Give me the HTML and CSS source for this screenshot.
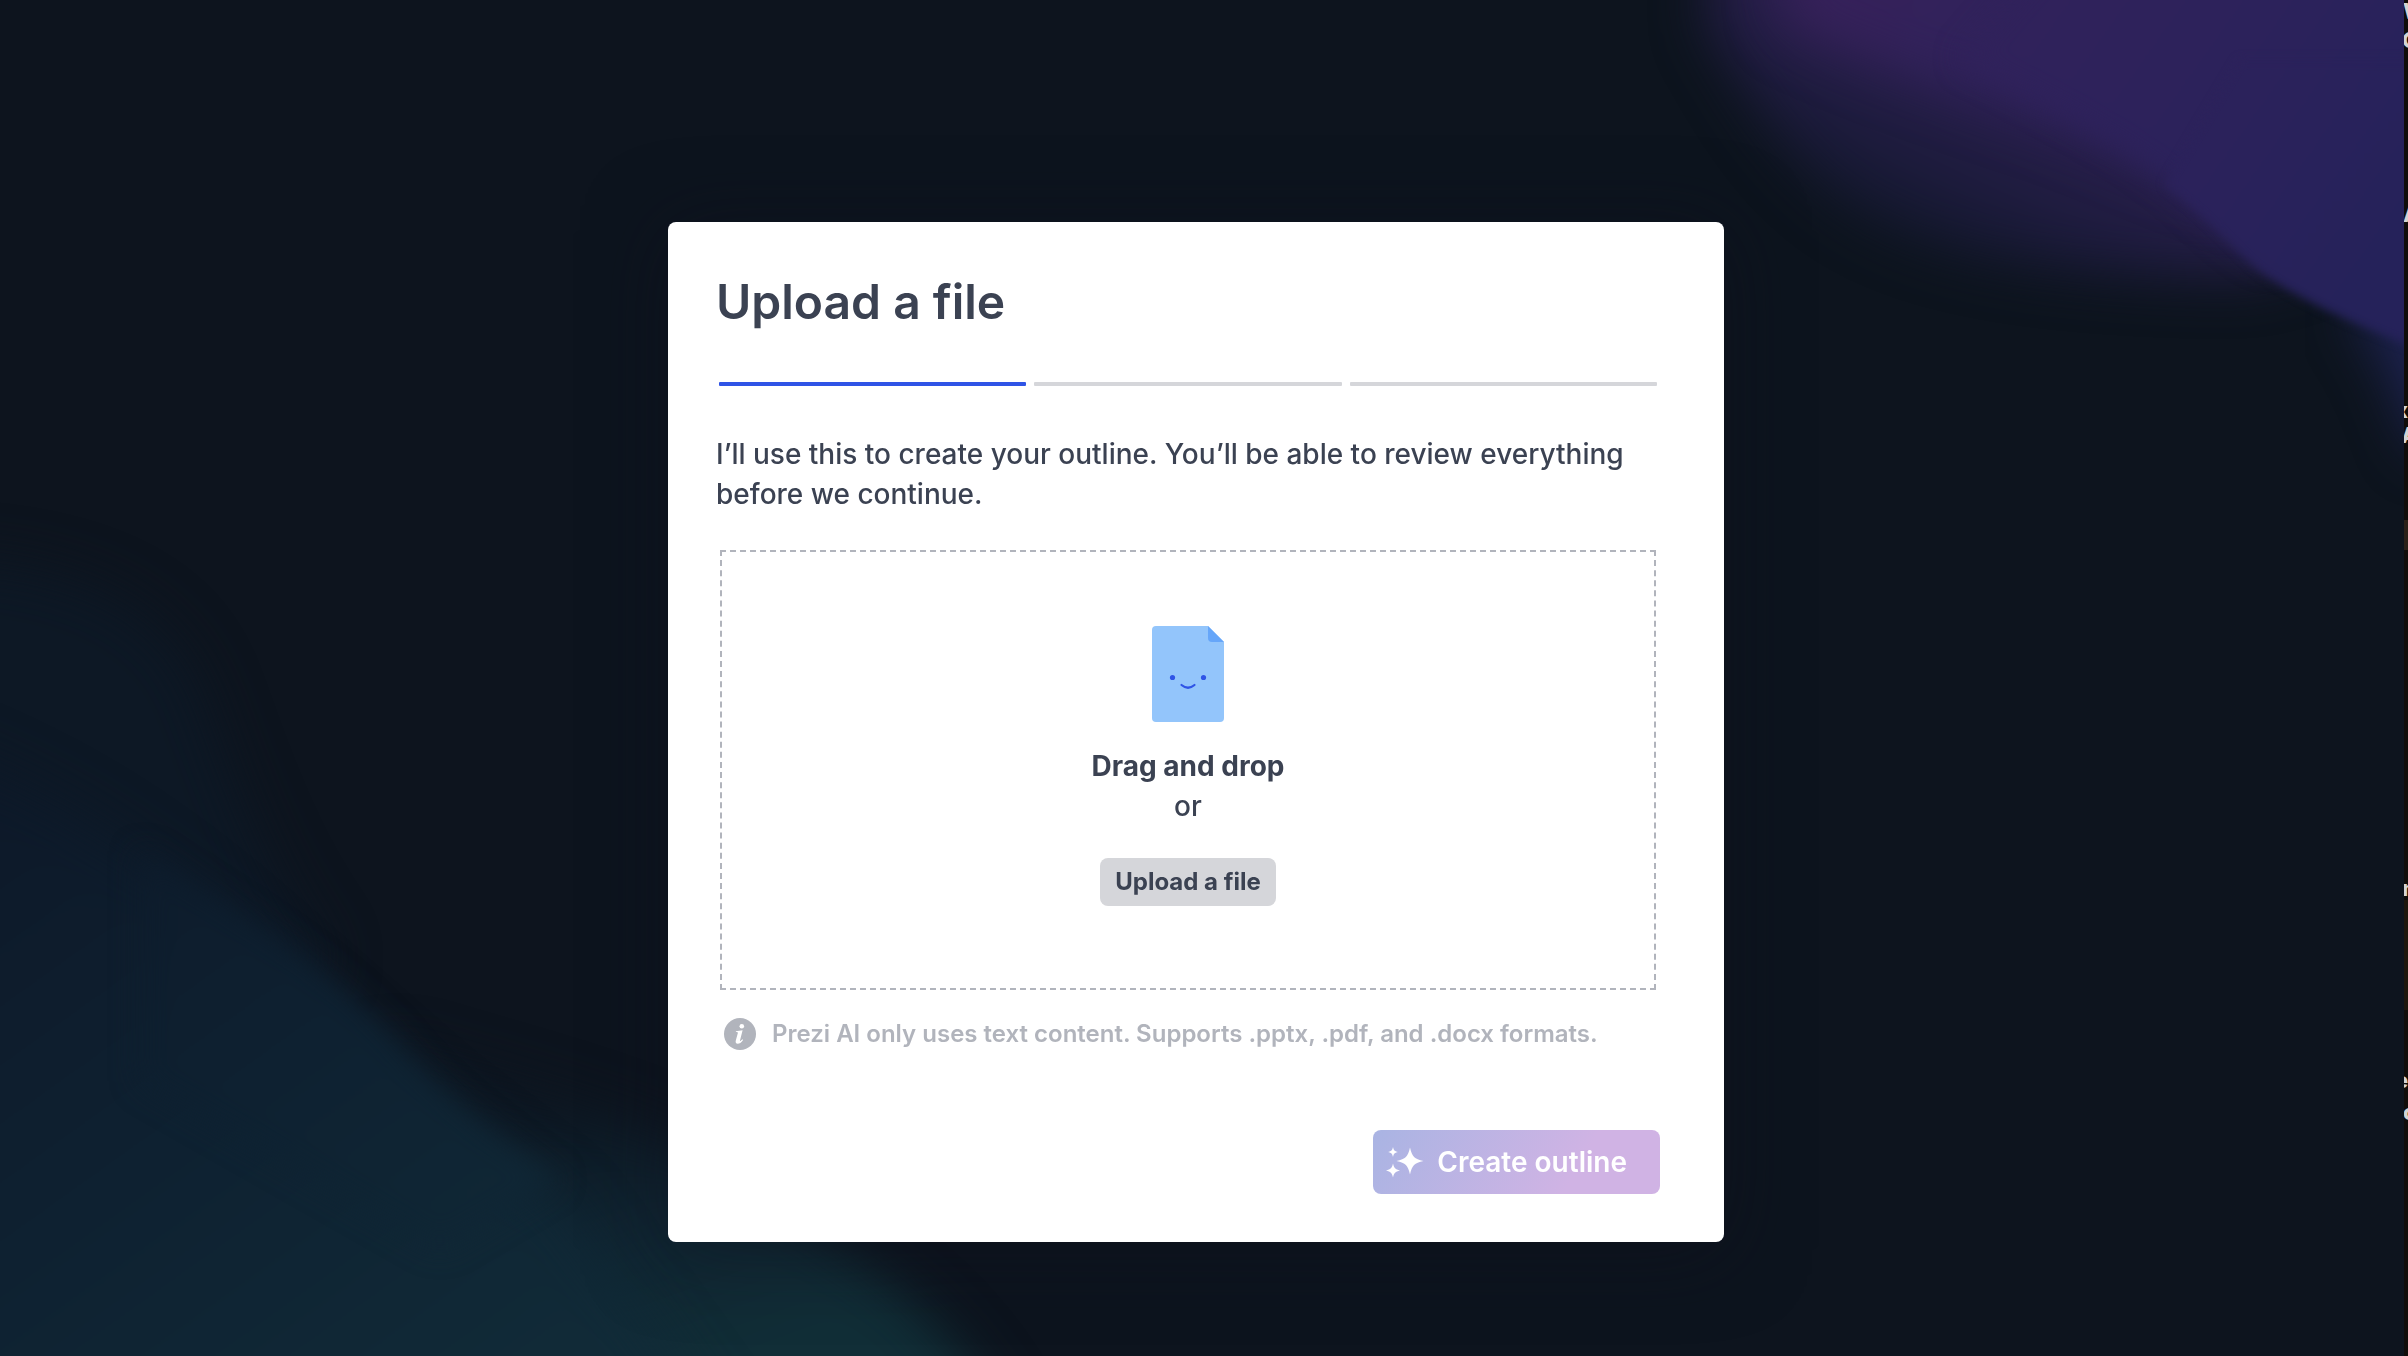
FILE: index.html
```html
<!DOCTYPE html>
<html lang="en">
<head>
<meta charset="utf-8">
<meta name="viewport" content="width=device-width, initial-scale=1">
<title>Upload a file</title>
<link rel="stylesheet" href="styles.css">
</head>
<body>
<svg class="backdrop" viewBox="0 0 2408 1356" preserveAspectRatio="none" aria-hidden="true">
  <defs>
    <linearGradient id="violet" gradientUnits="userSpaceOnUse" x1="1840" y1="0" x2="2320" y2="340">
      <stop offset="0" stop-color="#36215a"/>
      <stop offset=".2" stop-color="#31225b"/>
      <stop offset=".6" stop-color="#2c225b"/>
      <stop offset="1" stop-color="#25225a"/>
    </linearGradient>
    <linearGradient id="violetHalo" gradientUnits="userSpaceOnUse" x1="2060" y1="80" x2="1960" y2="290">
      <stop offset="0" stop-color="#2b1f4e"/>
      <stop offset=".5" stop-color="#1f1c40"/>
      <stop offset="1" stop-color="#101728"/>
    </linearGradient>
    <linearGradient id="sea" gradientUnits="userSpaceOnUse" x1="60" y1="700" x2="560" y2="1400">
      <stop offset="0" stop-color="#0d1828"/>
      <stop offset=".5" stop-color="#0e2131"/>
      <stop offset="1" stop-color="#112b38"/>
    </linearGradient>
    <linearGradient id="seaHalo" gradientUnits="userSpaceOnUse" x1="620" y1="1080" x2="720" y2="1356">
      <stop offset="0" stop-color="#0d1722"/>
      <stop offset=".5" stop-color="#102532"/>
      <stop offset="1" stop-color="#112e37"/>
    </linearGradient>
    <filter id="soft" x="-30%" y="-30%" width="160%" height="160%" color-interpolation-filters="sRGB"><feGaussianBlur stdDeviation="26"/></filter>
    <filter id="mid" x="-30%" y="-30%" width="160%" height="160%" color-interpolation-filters="sRGB"><feGaussianBlur stdDeviation="14"/></filter>
    <filter id="fine" x="-30%" y="-30%" width="160%" height="160%" color-interpolation-filters="sRGB"><feGaussianBlur stdDeviation="5"/></filter>
  </defs>
  <rect width="2408" height="1356" fill="#0d141e"/>
  <path fill="url(#violetHalo)" filter="url(#soft)" d="M1720-80L1705 20C1740 80 1770 140 1830 190C1910 255 2030 275 2250 278L2500 200V-80Z"/>
  <path fill="#1d2250" filter="url(#soft)" d="M2350 310C2385 350 2400 400 2420 450H2500V200Z"/>
  <path fill="url(#violet)" filter="url(#soft)" d="M1790-80L1780 20C1860 60 1940 85 2050 122C2120 145 2170 170 2250 200L2500 230V-80Z"/>
  <path fill="url(#violet)" filter="url(#mid)" d="M1960 60C2060 110 2130 150 2180 192C2210 220 2240 250 2265 262H2480V-80H2080Z"/>
  <path fill="url(#violet)" filter="url(#fine)" d="M2165 185C2200 210 2225 238 2252 264C2288 296 2350 322 2420 350V60H2240Z"/>
  <path fill="#0d1825" filter="url(#soft)" d="M-80 560C60 560 170 600 205 700C240 800 270 880 330 960L200 1100H-80Z"/>
  <path fill="url(#seaHalo)" filter="url(#soft)" d="M393 1050C520 1090 660 1120 740 1180C840 1250 950 1300 1020 1450H300V1100Z"/>
  <path fill="url(#sea)" filter="url(#soft)" d="M-80 740C80 800 180 880 270 960L430 1100L560 1200L740 1450H-80Z"/>
  <path fill="url(#sea)" filter="url(#mid)" d="M140 850C260 925 340 975 400 1045C440 1095 500 1140 560 1180L440 1250L140 1080Z"/>
</svg>

<main class="stage">
  <section class="dialog" role="dialog" aria-labelledby="dialog-title">
    <h1 class="dialog-title" id="dialog-title">Upload a file</h1>
    <div class="steps" role="progressbar" aria-label="Step" aria-valuemin="1" aria-valuemax="3" aria-valuenow="1">
      <span class="step step-active"></span>
      <span class="step"></span>
      <span class="step"></span>
    </div>
    <p class="intro">I’ll use this to create your outline. You’ll be able to review everything before we continue.</p>

    <div class="dropzone">
      <svg class="file-icon" viewBox="0 0 72 96" aria-hidden="true">
        <path fill="#93c5fb" d="M4 0H56L72 16V92a4 4 0 0 1-4 4H4a4 4 0 0 1-4-4V4a4 4 0 0 1 4-4Z"/>
        <path fill="#66a6f9" d="M56 0L72 16H60a4 4 0 0 1-4-4Z"/>
        <circle cx="20.500" cy="51.500" r="2.600" fill="#2f54e6"/>
        <circle cx="51.500" cy="51.500" r="2.600" fill="#2f54e6"/>
        <path d="M29.500 59Q36 64.500 42.500 59" fill="none" stroke="#2f54e6" stroke-width="2.200" stroke-linecap="round"/>
      </svg>
      <p class="drop-text"><strong>Drag and drop</strong><br>or</p>
      <button class="upload-button" type="button">Upload a file</button>
    </div>

    <p class="hint">
      <svg class="info-icon" viewBox="0 0 32 32" aria-hidden="true">
        <circle cx="16" cy="16" r="16" fill="#b1b4bc"/>
        <circle cx="17.800" cy="8.200" r="2.300" fill="#fff"/>
        <path fill="#fff" d="M12 13.200L18.600 12.200L16 22.400C15.800 23.300 16.400 23.500 18.400 21.300L19.100 21.900C17.200 24.600 15.400 25.700 13.700 25.700C11.900 25.700 11.300 24.400 11.800 22.500L13.800 15.200C14 14.400 13.600 14.200 11.800 14.100Z"/>
      </svg>
      <span>Prezi AI only uses text content. Supports .pptx, .pdf, and .docx formats.</span>
    </p>

    <div class="actions">
      <button class="create-button" type="button" disabled>
        <svg class="spark-icon" viewBox="0 0 40 32" aria-hidden="true">
          <path fill="#fff" d="M25 1.500C27.200 10.800 29.200 12.800 38.500 15C29.200 17.200 27.200 19.200 25 28.500C22.800 19.200 20.800 17.200 11.500 15C20.800 12.800 22.800 10.800 25 1.500Z"/>
          <path fill="#fff" d="M8 1C8.900 4.500 9.500 5.100 13 6C9.500 6.900 8.900 7.500 8 11C7.100 7.500 6.500 6.900 3 6C6.500 5.100 7.100 4.500 8 1Z"/>
          <path fill="#fff" d="M8 17.500C9.200 22.300 10.200 23.300 15 24.500C10.200 25.700 9.200 26.700 8 31.500C6.800 26.700 5.800 25.700 1 24.500C5.800 23.300 6.800 22.300 8 17.500Z"/>
        </svg>
        <span>Create outline</span>
      </button>
    </div>
  </section>
</main>

<svg class="edge" width="4" height="1356" viewBox="0 0 4 1356" aria-hidden="true">
  <rect width="4" height="1356" fill="#100d0a"/>
  <rect y="520" width="4" height="30" fill="#2a2119"/>
  <rect y="900" width="4" height="110" fill="#1d170d"/>
  <g class="edge-text">
    <text x="-1" y="19">W</text>
    <text x="-2" y="48">G</text>
    <text x="-1" y="222">A</text>
    <text x="-9" y="418">x</text>
    <text x="-3" y="443">A</text>
    <text x="-2" y="896">n</text>
    <text x="-9" y="1088">e</text>
    <text x="-1" y="1120">c</text>
  </g>
</svg>
</body>
</html>
```
FILE: styles.css
```css
* {
  box-sizing: border-box;
}

body {
  margin: 0;
  min-height: 100vh;
  background: #0d141e;
  color: #3b4252;
  font-family: Inter, "Liberation Sans", sans-serif;
}

.backdrop {
  position: fixed;
  inset: 0;
  width: 100%;
  height: 100%;
}

.edge {
  position: fixed;
  top: 0;
  right: 0;
}

.edge-text {
  fill: #d4d4d4;
  font-size: 22px;
  font-weight: 800;
}

.stage {
  position: relative;
  display: flex;
  justify-content: center;
  padding: 222px 32px 48px 16px;
}

.dialog {
  width: 100%;
  max-width: 1056px;
  padding: 48px 64px 48px 48px;
  border-radius: 8px;
  background: #fff;
  box-shadow: 0 8px 80px rgba(13, 16, 28, 0.5);
}

.dialog-title {
  margin: 0;
  font-size: 48px;
  font-weight: 600;
  line-height: 64px;
}

.steps {
  display: grid;
  grid-template-columns: repeat(3, 1fr);
  gap: 8px;
  margin: 48px 3px;
}

.step {
  height: 4px;
  border-radius: 1px;
  background: #d5d6da;
}

.step-active {
  background: #2f54e6;
}

.intro {
  margin: 0;
  font-size: 28px;
  font-weight: 500;
  line-height: 40px;
}

.dropzone {
  display: flex;
  flex-direction: column;
  align-items: center;
  margin: 36px 4px 28px;
  padding: 74px 24px 82px;
  border: 2px dashed #b1b4bc;
}

.file-icon {
  width: 72px;
  height: 96px;
}

.drop-text {
  margin: 24px 0 32px;
  font-size: 28px;
  font-weight: 500;
  line-height: 40px;
  text-align: center;
}

.drop-text strong {
  font-weight: 700;
}

.upload-button {
  height: 48px;
  padding: 0 15px;
  border: 0;
  border-radius: 8px;
  background: #d5d6da;
  color: #3b4252;
  font: 700 24px/32px Inter, "Liberation Sans", sans-serif;
}

.hint {
  display: flex;
  align-items: center;
  gap: 16px;
  margin: 0 8px;
  color: #b1b4bc;
  font-size: 24px;
  font-weight: 600;
  line-height: 32px;
}

.info-icon {
  flex: none;
  width: 32px;
  height: 32px;
}

.actions {
  display: flex;
  justify-content: flex-end;
  margin-top: 80px;
}

.create-button {
  display: flex;
  align-items: center;
  gap: 12px;
  height: 64px;
  padding: 0 33px 0 12px;
  border: 0;
  border-radius: 8px;
  background: linear-gradient(120deg, #a9b4e3, #d0b3e4 70%);
  color: #fff;
  font: 600 28px/40px Inter, "Liberation Sans", sans-serif;
}

.spark-icon {
  width: 40px;
  height: 32px;
}
```
